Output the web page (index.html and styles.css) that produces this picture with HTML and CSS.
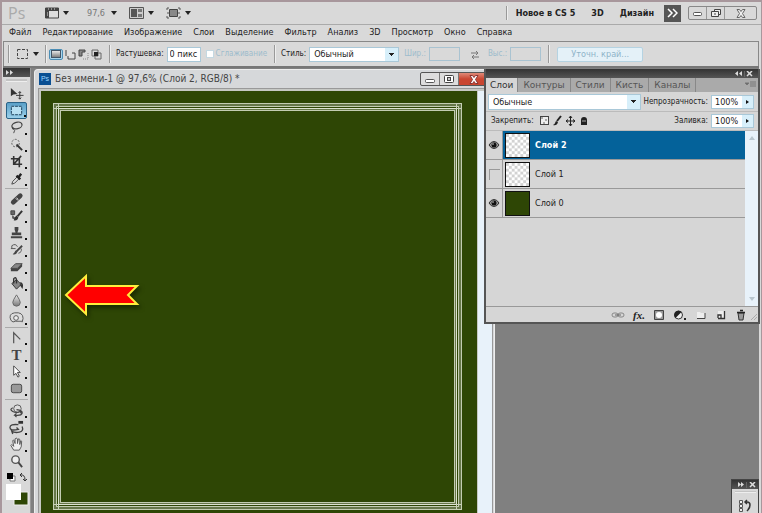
FILE: index.html
```html
<!DOCTYPE html>
<html lang="ru">
<head>
<meta charset="utf-8">
<title>Ps</title>
<link rel="stylesheet" href="styles.css">
</head>
<body>
<svg class="defs" aria-hidden="true">
  <defs>
    <pattern id="checks" width="6" height="6" patternUnits="userSpaceOnUse"><rect width="6" height="6" fill="#fff"/><path d="M0 0h3v3H0zM3 3h3v3H3z" fill="#d2d2d2"/></pattern>
    <linearGradient id="shade" x2="0" y2="1"><stop stop-color="#eee"/><stop offset="1" stop-color="#777"/></linearGradient>
    <symbol id="eye" viewBox="0 0 12 10"><path d="M1 5Q3 1.500 6 1.500T11 5Q9 8.500 6 8.500T1 5z" fill="#999" stroke="#333"/><circle cx="6" cy="5" r="2.500" fill="#111"/><circle cx="5" cy="4" r=".8" fill="#ddd"/></symbol>
  </defs>
</svg>
<header class="appbar">
  <span class="logo">Ps</span>
  <button class="flat drop first" aria-label="Вид"><svg width="14" height="12"><path d="M.5 1h13v10H.5z" fill="#ddd" stroke="#444"/><path d="M1 1h12v3H1zM1 4h3v7H1z" fill="#444"/><path d="M3 2h1m2 0h1m2 0h1M2 6h1M2 8h1" stroke="#ddd"/></svg></button>
  <button class="flat drop zoom">97,6</button>
  <button class="flat drop" aria-label="Расположение"><svg width="15" height="12"><path d="M.5.5h14v11H.5z" fill="#ccc" stroke="#555"/><path d="M2 2h6v8H2z" fill="#555"/><path d="M9 2h4v3H9zM9 7h4v3H9z" fill="#777"/></svg></button>
  <button class="flat drop screen" aria-label="Экран"><svg width="15" height="12"><path d="M3.500 2.500h8v7h-8z" fill="#888" stroke="#444"/><path d="M1 3V1h2M12 1h2v2M14 9v2h-2M3 11H1V9M1 6h2M12 6h2" fill="none" stroke="#555"/></svg></button>
  <div class="spaces">
    <i class="rule"></i>
    <button class="flat">Новое в CS 5</button>
    <button class="flat">3D</button>
    <button class="flat">Дизайн</button>
    <button class="more" aria-label="Ещё"><svg width="11" height="10"><path d="M1 1l4 4-4 4M6 1l4 4-4 4" fill="none" stroke="#fff" stroke-width="1.500"/></svg></button>
    <div class="sys">
      <button aria-label="Свернуть"><svg width="10" height="9"><rect x=".5" y="3.500" width="8" height="3" rx="1" fill="#fff" stroke="#555"/></svg></button>
      <button aria-label="Восстановить"><svg width="10" height="9"><path d="M3.500 2.500v-2h6v5h-2M.5 2.500h7v5h-7zM3 5h2" fill="#eee" stroke="#444"/></svg></button>
      <button aria-label="Закрыть"><svg width="10" height="9"><path d="M1 .5h2.500L5 2.500 6.500.5H9L6.500 4.500 9 8.500H6.500L5 6.500 3.500 8.500H1l2.500-4z" fill="#eee" stroke="#666"/></svg></button>
    </div>
  </div>
</header>
<nav class="menu">
  <a href="#">Файл</a><a href="#">Редактирование</a><a href="#">Изображение</a><a href="#">Слои</a><a href="#">Выделение</a><a href="#">Фильтр</a><a href="#">Анализ</a><a href="#">3D</a><a href="#">Просмотр</a><a href="#">Окно</a><a href="#">Справка</a>
</nav>
<form class="options">
  <i class="rule"></i>
  <button type="button" class="flat drop tool-now" aria-label="Прямоугольная область"><svg width="13" height="12"><rect x="1.500" y="1.500" width="10" height="9" fill="none" stroke="#444" stroke-dasharray="3 1.500"/></svg></button>
  <i class="rule"></i>
  <div class="modes">
    <button type="button" class="on" aria-label="Новая"><svg width="12" height="9"><rect x="1.500" y=".5" width="9" height="7" fill="url(#shade)" stroke="#456"/></svg></button>
    <button type="button" aria-label="Добавить"><svg width="11" height="11"><path d="M1 1h6v3h3v6H3V7H1z" fill="#ddd"/><path d="M1 7V1M3 7v3h7V4H7" fill="none" stroke="#444"/></svg></button>
    <button type="button" aria-label="Вычесть"><svg width="11" height="11"><path d="M1 7V1h6v2H4v4z" fill="#888" stroke="#444"/><path d="M5 10h5V4" fill="none" stroke="#888" stroke-dasharray="1 1"/></svg></button>
    <button type="button" aria-label="Пересечение"><svg width="11" height="11"><path d="M1 1h6v6H1zM4 4h6v6H4z" fill="none" stroke="#666"/><path d="M3 3h4v4H3z" fill="#222"/></svg></button>
  </div>
  <i class="rule"></i>
  <label for="feather">Растушевка:</label><input class="field feather" id="feather" value="0 пикс">
  <label class="dim"><input type="checkbox" disabled>Сглаживание</label>
  <i class="rule"></i>
  <label for="style">Стиль:</label>
  <select class="combo style" id="style"><option>Обычный</option></select>
  <label class="dim" for="w">Шир.:</label><input class="blank" id="w" disabled>
  <svg class="swap" width="10" height="9"><path d="M1 3h7M6 1l2 2-2 2M9 7H2M4 5L2 7l2 2" fill="none" stroke="#777"/></svg>
  <label class="dim" for="h">Выс.:</label><input class="blank" id="h" disabled>
  <i class="rule"></i>
  <button type="button" class="refine" disabled>Уточн. край...</button>
</form>
<main class="work">
  <aside class="toolbox">
    <div class="cap"><svg width="8" height="5"><path d="M0 0l3 2.500L0 5zM4 0l3 2.500L4 5z" fill="#ddd"/></svg></div>
    <div class="tools">
      <i class="grip"></i>
      <button class="solo" aria-label="Перемещение"><svg viewBox="0 0 16 16"><path d="M2 2v9l2.500-2L9 8.500z" fill="#333"/><path d="M11.500 6v8M7.500 10h8M10 7.500l1.500-1.500L13 7.500M10 12.500l1.500 1.500 1.500-1.500" fill="none" stroke="#333"/></svg></button>
      <button class="on" aria-label="Область"><svg viewBox="0 0 16 16"><rect x="2.500" y="3.500" width="11" height="9" fill="#b8e0f2" stroke="#173c57" stroke-dasharray="3 1"/></svg></button>
      <button aria-label="Лассо"><svg viewBox="0 0 16 16"><ellipse cx="8.500" cy="6" rx="5.500" ry="3.500" transform="rotate(-14 8 6)" fill="none" stroke="#444" stroke-width="1.300"/><path d="M4 8q-1 2 1 2t0 4" fill="none" stroke="#444"/></svg></button>
      <button aria-label="Волшебная палочка"><svg viewBox="0 0 16 16"><circle cx="7" cy="6.500" r="4" fill="none" stroke="#555" stroke-dasharray="2 1.500"/><path d="M8 8l6 6" stroke="#333" stroke-width="2"/></svg></button>
      <button aria-label="Рамка"><svg viewBox="0 0 16 16"><path d="M5 2v9h9M2 5h9v9M5 11l8-9" fill="none" stroke="#333" stroke-width="1.700"/></svg></button>
      <button aria-label="Пипетка"><svg viewBox="0 0 16 16"><path d="M3 14l1-3 5-5 2 2-5 5z" fill="#ddd" stroke="#444"/><path d="M8 5l4 4M10 7l3-4" stroke="#222" stroke-width="2.500"/></svg></button>
      <hr>
      <button aria-label="Лечащая кисть"><svg viewBox="0 0 16 16"><path d="M4.500 12L12 5" stroke="#444" stroke-width="5" stroke-linecap="round"/><path d="M7 8l3 2M8 7l2 2" stroke="#ccc"/></svg></button>
      <button aria-label="Кисть"><svg viewBox="0 0 16 16"><path d="M2 3h4v4H2zM4 8v3h3" fill="#666" stroke="#444"/><path d="M14 3L9 9" stroke="#333" stroke-width="2"/><path d="M5 13q4 1 5-3L8 8q-2 1-3 5z" fill="#333"/></svg></button>
      <button aria-label="Штамп"><svg viewBox="0 0 16 16"><path d="M6 2h4v3L9 8h4v3H3V8h4L6 5zM2 12h12v2H2z" fill="#444"/></svg></button>
      <button aria-label="Архивная кисть"><svg viewBox="0 0 16 16"><path d="M14 4l-6 6" stroke="#444" stroke-width="2"/><path d="M4 13q4 1 5-3L7 9q-1 2-3 4z" fill="#444"/><path d="M3 4q4-3 6 1M2 7h5M3 4v3M10 12q4-1 3-5" fill="none" stroke="#555"/></svg></button>
      <button aria-label="Ластик"><svg viewBox="0 0 16 16"><path d="M2 10l5-5h7l-5 5z" fill="#888" stroke="#444"/><path d="M2 10h7v3H2zM9 10l5-5v3l-5 5z" fill="#444"/></svg></button>
      <button aria-label="Заливка"><svg viewBox="0 0 16 16"><path d="M3 8l5-4 5 5-5 5z" fill="#888" stroke="#333"/><path d="M5 8V3q2-3 3 1v4M12 7q3 1 2 5l-2-3" fill="none" stroke="#333" stroke-width="1.500"/></svg></button>
      <button aria-label="Размытие"><svg viewBox="0 0 16 16"><path d="M8 2q-4 6-4 8a4 4 0 0 0 8 0q0-2-4-8z" fill="url(#shade)" stroke="#666"/></svg></button>
      <button aria-label="Осветлитель"><svg viewBox="0 0 16 16"><path d="M2 11q-3-7 4-8 9-1 9 6l-1 4" fill="#ddd" stroke="#555"/><path d="M2 11q2 3 5 1h7" fill="none" stroke="#555"/><circle cx="7.500" cy="8.500" r="2.500" fill="#eee" stroke="#555"/></svg></button>
      <hr>
      <button aria-label="Перо"><svg viewBox="0 0 16 16"><path d="M5 14V3l7 7" fill="none" stroke="#555" stroke-width="1.300"/></svg></button>
      <button class="type" aria-label="Текст">T</button>
      <button aria-label="Стрелка"><svg viewBox="0 0 16 16"><path d="M5 2v10l2.500-2 2 4 1.500-1-2-4h3z" fill="#fff" stroke="#444"/></svg></button>
      <button aria-label="Фигура"><svg viewBox="0 0 16 16"><rect x="2.500" y="3.500" width="11" height="9" rx="2" fill="#999" stroke="#444"/></svg></button>
      <hr class="wide">
      <button aria-label="3D-поворот"><svg viewBox="0 0 16 16"><circle cx="9" cy="6" r="4" fill="#ddd" stroke="#555"/><path d="M4 5Q0 7 4 9t8 0l1 2M8 7q7 1 6 4t-8 2l2-2M6 13l2 2" fill="none" stroke="#444" stroke-width="1.300"/></svg></button>
      <button aria-label="3D-камера"><svg viewBox="0 0 16 16"><path d="M10 1h5v3h-5z" fill="#333"/><path d="M10 5Q1 4 1 8t9 2l-2-2M14 7q2 5-3 6t-8-1l1 3" fill="none" stroke="#444" stroke-width="1.400"/></svg></button>
      <button aria-label="Рука"><svg viewBox="0 0 16 16"><path d="M5 14L2 9l1-1 2 2-1-6 1-1 1.500 4V2l1-1L9 2v5l1-5h1l.5 1v5l1-4 1 .5-.5 6-2 3.500z" fill="#eee" stroke="#555"/></svg></button>
      <button class="solo" aria-label="Масштаб"><svg viewBox="0 0 16 16"><circle cx="7" cy="6" r="4" fill="#eee" stroke="#555" stroke-width="1.500"/><path d="M10 9l4 5" stroke="#444" stroke-width="2"/></svg></button>
      <svg class="colors" viewBox="0 0 28 36"><path d="M7 4h5v5H7z" fill="#fff" stroke="#777"/><path d="M4 1h6v6H4z" fill="#000"/><path d="M17 3q5-1 5 5M19 1l-2 2 2 2M20 7l2 2 2-2" fill="none" stroke="#333"/><path d="M11 20h14v13H11z" fill="#2e4605" stroke="#eee"/><path d="M3 12h15v16H3z" fill="#fff"/></svg>
    </div>
  </aside>
  <section class="doc">
    <div class="title">
      <span class="ps">Ps</span>
      <h1>Без имени-1 @ 97,6% (Слой 2, RGB/8) *</h1>
      <div class="win">
        <button aria-label="Свернуть"><svg width="10" height="9"><rect x=".5" y="4.500" width="9" height="3" rx="1" fill="#fff" stroke="#555"/></svg></button>
        <button aria-label="Развернуть"><svg width="10" height="9"><rect x=".5" y=".5" width="9" height="7" rx="1" fill="#fff" stroke="#444"/><rect x="3.500" y="2.500" width="3" height="3" fill="#ccc" stroke="#444"/></svg></button>
        <button class="close" aria-label="Закрыть"><svg width="10" height="9"><path d="M1 .5h2.500L5 2.500 6.500.5H9L6.500 4.500 9 8.500H6.500L5 6.500 3.500 8.500H1l2.500-4z" fill="#fff" stroke="#833"/></svg></button>
      </div>
    </div>
    <div class="view">
      <div class="canvas">
        <div class="frame"><i class="corner tl"></i><i class="corner tr"></i><i class="corner bl"></i><i class="corner br"></i></div>
        <svg class="arrow" viewBox="0 0 82 48"><path d="M4 22L24 3v10h51l-9 9 9 9H24v10z" fill="#f00" stroke="#ffee3c" stroke-width="2"/></svg>
      </div>
      <i class="vscroll"></i>
    </div>
  </section>
  <section class="panel">
    <div class="cap"><svg width="18" height="6"><path d="M3 0v5L0 2.500zM7 0v5L4 2.500z" fill="#ddd"/><path d="M9.500 0v6" stroke="#666"/><path d="M12 0l5 5M17 0l-5 5" stroke="#ddd" stroke-width="1.500"/></svg></div>
    <div class="tabs"><button class="on">Слои</button><button>Контуры</button><button>Стили</button><button>Кисть</button><button>Каналы</button><svg width="11" height="7"><path d="M0 2h4L2 4zM5 1h6M5 3h6M5 5h6" fill="#666" stroke="#777"/></svg></div>
    <div class="row">
      <select class="combo blend" aria-label="Режим"><option>Обычные</option></select>
      <label for="op">Непрозрачность:</label><span class="spin"><input id="op" value="100%"><button aria-label="Изменить"></button></span>
    </div>
    <div class="row lock">
      <span class="caption">Закрепить:</span>
      <svg width="50" height="12"><rect x="1.500" y="1.500" width="8" height="8" fill="#eee" stroke="#444"/><path d="M2 2h2v2H2zM6 4h2v2H6zM4 7h2v2H4z" fill="#aaa"/><path d="M22 1l-4 5" stroke="#222" stroke-width="2"/><path d="M14 10q4 1 5-3l-2-1q-1 3-3 4z" fill="#222"/><path d="M27 6h9M31.500 1v10M30 3l1.500-2L33 3M30 9l1.500 2L33 9M29 4.500L27 6l2 1.500M34 4.500L36 6l-2 1.500" fill="none" stroke="#222"/><path d="M42 10V5q0-3 3-3t3 3v5z" fill="#222"/><path d="M43 6h4" stroke="#aaa"/></svg>
      <label for="fill">Заливка:</label><span class="spin"><input id="fill" value="100%"><button aria-label="Изменить"></button></span>
    </div>
    <div class="list">
      <ul class="layers">
        <li class="on"><span class="vis"><svg width="12" height="10"><use href="#eye"/></svg></span><svg class="thumb" viewBox="0 0 24 24"><rect width="24" height="24" fill="url(#checks)"/></svg>Слой 2</li>
        <li><span class="vis"><i></i></span><svg class="thumb" viewBox="0 0 24 24"><rect width="24" height="24" fill="url(#checks)"/></svg>Слой 1</li>
        <li><span class="vis"><svg width="12" height="10"><use href="#eye"/></svg></span><svg class="thumb" viewBox="0 0 24 24"><rect width="24" height="24" fill="#2e4605"/></svg>Слой 0</li>
      </ul>
      <div class="scroll"><svg width="6" height="4"><path d="M0 4h6L3 0z" fill="#b9c6ce"/></svg><svg width="6" height="4"><path d="M0 0h6L3 4z" fill="#b9c6ce"/></svg></div>
    </div>
    <div class="actions">
      <button aria-label="Связать"><svg width="14" height="12"><rect x="1" y="4" width="6" height="4" rx="2" fill="none" stroke="#888"/><rect x="7" y="4" width="6" height="4" rx="2" fill="none" stroke="#888"/><path d="M4 6h6" stroke="#666"/></svg></button>
      <button class="fx" aria-label="Эффекты">fx.</button>
      <button aria-label="Маска"><svg width="12" height="12"><path d="M1.500 1.500h9v9h-9z" fill="#999" stroke="#444"/><circle cx="6" cy="6" r="3" fill="#fff"/></svg></button>
      <button aria-label="Корректирующий слой"><svg width="14" height="12"><circle cx="5.500" cy="6" r="4" fill="#eee" stroke="#333"/><path d="M2.500 9a4 4 0 0 1 6-6z" fill="#222"/><path d="M11 9h2v2h-2z" fill="#222"/></svg></button>
      <button aria-label="Группа"><svg width="12" height="12"><path d="M2 3h3l1 1h4v6H2z" fill="#eee"/><path d="M2 9.500h8V4" fill="none" stroke="#444"/></svg></button>
      <button aria-label="Новый слой"><svg width="12" height="12"><path d="M3 2h6v8H3z" fill="#eee"/><path d="M3 9.500h6.500V2M3 9V6h3v3" fill="none" stroke="#333" stroke-width="1.300"/></svg></button>
      <button aria-label="Удалить"><svg width="12" height="12"><path d="M3 4h6L8 11H4z" fill="#999" stroke="#333"/><path d="M2 3.500h8M5 1.500h3" stroke="#222" stroke-width="1.500"/></svg></button>
      <svg class="size" width="8" height="12"><path d="M1 11l6-6M4 11l3-3" stroke="#aaa"/></svg>
    </div>
  </section>
  <section class="mini">
    <div class="cap"><svg width="18" height="6"><path d="M0 0l3 2.500L0 5zM3 0l3 2.500L3 5z" fill="#ddd"/><path d="M8.500 0v6" stroke="#666"/><path d="M12 0l5 5M17 0l-5 5" stroke="#ddd" stroke-width="1.500"/></svg></div>
    <i class="grip"></i>
    <svg class="history" width="14" height="14"><path d="M1.500 1.500h3v3h-3zM1.500 5.500h3v3h-3zM1.500 9.500h3v3h-3z" fill="#eee" stroke="#555"/><path d="M7 3h2q3 0 3 3t-3 6M9 1L7 3l2 2" fill="none" stroke="#333" stroke-width="1.500"/></svg>
  </section>
</main>
</body>
</html>
```
FILE: styles.css
```css
* { box-sizing: border-box; }
body {
  margin: 0;
  height: 100vh;
  display: flex;
  flex-direction: column;
  overflow: hidden;
  border: 2px solid #a8979c;
  border-width: 2px 1px 0 2px;
  background: #d9d9d9;
  color: #222;
  font: 9px/12px "DejaVu Sans Condensed", "DejaVu Sans", sans-serif;
}
button, input, select { font: inherit; color: inherit; margin: 0; padding: 0; border: 0; background: none; border-radius: 0; }
svg { display: block; flex: none; }
.defs { position: absolute; width: 0; height: 0; }
a { color: inherit; text-decoration: none; }
.rule { width: 2px; height: 18px; border-left: 1px solid #999; border-right: 1px solid #eee; flex: none; }

.appbar { display: flex; align-items: center; height: 23px; flex: none; padding: 0 4px 0 6px; border-bottom: 1px solid #aaa; }
.logo { width: 37px; color: #aaa; font: 16px/20px "Open Sans", sans-serif; }
.flat { display: flex; align-items: center; white-space: nowrap; }
.drop::after { content: ""; margin-left: 4px; border: 3px solid transparent; border-top: 4px solid #222; border-bottom: 0; }
.zoom { margin: 0 12px 0 18px; color: #777; }
.zoom::after { margin-left: 6px; }
.screen { margin-left: 12px; }
.spaces { margin-left: auto; display: flex; align-items: center; font-weight: bold; gap: 16px; }
.spaces .rule { height: 14px; margin-right: -8px; }
.more { width: 17px; height: 17px; display: grid; place-items: center; background: #555; margin-left: -6px; }
.sys { display: flex; border: 1px solid #888; border-radius: 2px; height: 14px; margin-left: -9px; }
.sys button { width: 18px; display: grid; place-items: center; border-right: 1px solid #999; }
.sys button:last-child { width: 31px; border: 0; }

.menu { display: flex; gap: 11px; height: 16px; flex: none; padding: 0 7px; line-height: 15px; white-space: nowrap; }

.options { display: flex; align-items: center; height: 25px; flex: none; margin: 0 2px 0 1px; padding-left: 4px; border: 1px solid #888; border-bottom: 0; white-space: nowrap; }
.tool-now { margin: 0 6px 0 6px; }
.options label, .caption, .row label { font-size: 8px; }
.modes { display: flex; gap: 2px; margin: 0 7px 0 2px; }
.modes button { display: grid; place-items: center; }
.modes .on { border: 1px solid #4b8db5; border-radius: 2px; background: #a8d4ec; }
.options label { margin: 0 3px 0 5px; }
.field { background: #fff; border: 1px solid #a9c8d8; height: 15px; padding: 0 2px; }
.feather { width: 34px; }
.options .dim { color: #9dbccc; display: flex; align-items: center; gap: 2px; }
.dim input { appearance: none; width: 8px; height: 8px; background: #fff; border: 1px solid #c4d8e2; }
.dim + .rule { margin-left: 4px; }
.combo { appearance: none; height: 15px; padding: 0 18px 0 4px; border: 1px solid #a9c8d8; background: linear-gradient(#222, #222) right 4px top 5px / 5px 1px no-repeat, linear-gradient(#222, #222) right 5px top 6px / 3px 1px no-repeat, linear-gradient(#222, #222) right 6px top 7px / 1px 1px no-repeat, linear-gradient(#d7effa, #d7effa) right / 13px 100% no-repeat, #fff; }
.style { width: 90px; }
.blank { width: 31px; height: 14px; border: 1px solid #a9c3d1; }
.swap { margin: 0 3px 0 10px; }
.blank + .rule { margin: 0 7px; }
.refine { width: 86px; height: 15px; border: 1px solid #b5d3e2; background: #e4f1f8; color: #8fb4c8; border-radius: 2px; }

.work { position: relative; flex: 1; min-height: 0; display: flex; margin: 0 2px 0 1px; background: #808080; border-top: 2px solid #777; }
.cap { display: flex; align-items: center; justify-content: flex-end; background: linear-gradient(#333, #555); height: 9px; padding-right: 5px; flex: none; }
.toolbox { width: 28px; flex: none; background: #d8d8d8; border-right: 1px solid #999; }
.toolbox .cap { justify-content: flex-start; padding-left: 3px; }
.tools { display: flex; flex-direction: column; align-items: center; }
.grip { display: block; width: 21px; height: 3px; margin: 2px 0 3px; background: #c4c4c4; border-bottom: 1px solid #eee; }
.tools button { position: relative; width: 21px; height: 17px; display: grid; place-items: center; flex: none; }
.tools button svg { width: 15px; height: 15px; }
.tools button::after { content: ""; position: absolute; right: 0; bottom: 1px; width: 2px; height: 2px; background: #111; }
.tools .solo::after { display: none; }
.tools .on { background: linear-gradient(#5aa0c8, #9bd0ea); border: 1px solid #2a6387; border-radius: 2px; }
.tools .type { font: bold 15px/16px "Liberation Serif", serif; color: #444; }
.tools hr { width: 23px; margin: 1px 0; border: 0; border-top: 1px solid #aaa; }
.tools .wide { margin: 2px 0; }
.colors { width: 28px; height: 36px; margin-top: 2px; }

.doc { width: 461px; flex: none; margin: 1px 0 0 3px; display: flex; flex-direction: column; background: #d6d8da; border: 1px solid #eee; border-bottom: 0; border-radius: 4px 4px 0 0; }
.title { display: flex; align-items: center; height: 18px; flex: none; padding: 0 4px; }
.ps { width: 12px; height: 12px; background: #0a4f92; color: #9bd6ff; font: 7px/12px "Liberation Sans", sans-serif; text-align: center; }
.title h1 { margin: 0 auto 0 4px; font-size: 10px; font-weight: normal; color: #444; }
.win { display: flex; height: 14px; border: 1px solid #555; border-radius: 2px; background: #ddd; }
.win button { width: 19px; display: grid; place-items: center; border-right: 1px solid #777; }
.win .close { width: 30px; border: 0; background: linear-gradient(#e08a78, #c94631 50%); }
.view { flex: 1; min-height: 0; display: flex; margin: 0 1px 0 3px; padding: 2px 0 0 2px; border: 1px solid #999; border-bottom: 0; background: #c6c8c4; }
.vscroll { width: 14px; background: #e8f2fa; }
.canvas { position: relative; flex: 1; display: flex; padding: 12px 15px 3px 12px; margin-right: 1px; background: #2e4605; }
.frame { position: relative; flex: 1; border: 1px solid #c3ccb2; box-shadow: inset 0 0 0 2px #66774a, inset 0 0 0 3px #c3ccb2, inset 0 0 0 4px #2e4605, inset 0 0 0 5px #dce2d0, inset 0 0 0 6px #66774a, inset 0 0 0 7px #c3ccb2; }
.corner { position: absolute; width: 6px; height: 6px; border: 1px solid #c8d0b8; border-radius: 1px; }
.tl { top: -1px; left: -1px; }
.tr { top: -1px; right: -1px; }
.bl { bottom: -1px; left: -1px; }
.br { bottom: -1px; right: -1px; }
.arrow { position: absolute; left: 21px; top: 182px; width: 82px; height: 48px; filter: drop-shadow(2px 3px 2px #1a2a02); }

.panel { position: absolute; right: -1px; top: 1px; width: 276px; height: 255px; display: flex; flex-direction: column; border: 2px solid #555; border-width: 0 2px 2px; background: #d6d6d6; }
.tabs { display: flex; align-items: stretch; height: 14px; flex: none; background: #aaa; font-family: "DejaVu Sans", sans-serif; }
.tabs button { padding: 0 5px; border-right: 1px solid #888; color: #555; }
.tabs .on { padding: 0 4px; background: #d6d6d6; color: #333; }
.tabs svg { margin: 3px 2px 0 auto; }
.row { display: flex; align-items: center; height: 20px; flex: none; padding: 0 4px 0 2px; border-bottom: 1px solid #bbb; white-space: nowrap; }
.blend { flex: 1; height: 16px; }
.row label { margin: 0 3px 0 2px; }
.spin { display: flex; width: 43px; height: 14px; border: 1px solid #a9c8d8; background: #fff; }
.spin input { width: 30px; padding-left: 3px; }
.spin button { flex: 1; display: grid; place-items: center; background: #d7effa; }
.spin button::after { content: ""; border: 2px solid transparent; border-left: 3px solid #111; border-right: 0; }
.caption { margin-left: 3px; }
.lock svg { margin-left: 5px; }
.row.lock { height: 19px; }
.lock label { margin-left: auto; }
.list { flex: 1; display: flex; min-height: 0; border-bottom: 1px solid #999; }
.layers { flex: 1; margin: 0; padding: 0; list-style: none; }
.layers li { display: flex; align-items: center; height: 29px; border-bottom: 1px solid #999; }
.layers .on { background: #04629a; color: #fff; font-weight: bold; }
.vis { width: 17px; height: 28px; display: grid; place-items: center; background: #d6d6d6; border-right: 1px solid #999; }
.vis i { width: 11px; height: 11px; border: 1px solid #999; border-width: 1px 0 0 1px; }
.thumb { width: 25px; height: 25px; margin: 0 5px 0 2px; border: 1px solid #111; }
.scroll { width: 13px; display: flex; flex-direction: column; justify-content: space-between; align-items: center; padding: 5px 0; background: #e8f2fa; }
.actions { display: flex; align-items: center; justify-content: flex-end; height: 15px; flex: none; gap: 8px; }
.fx { font: italic bold 11px/12px "Liberation Serif", serif; }
.size { margin-left: -5px; }

.mini { position: absolute; right: 0; bottom: 0; width: 28px; height: 34px; display: flex; flex-direction: column; align-items: center; background: #d8d8d8; border: 1px solid #444; border-bottom: 0; }
.mini .cap { align-self: stretch; padding-right: 2px; }
.history { margin-top: 3px; }
```
